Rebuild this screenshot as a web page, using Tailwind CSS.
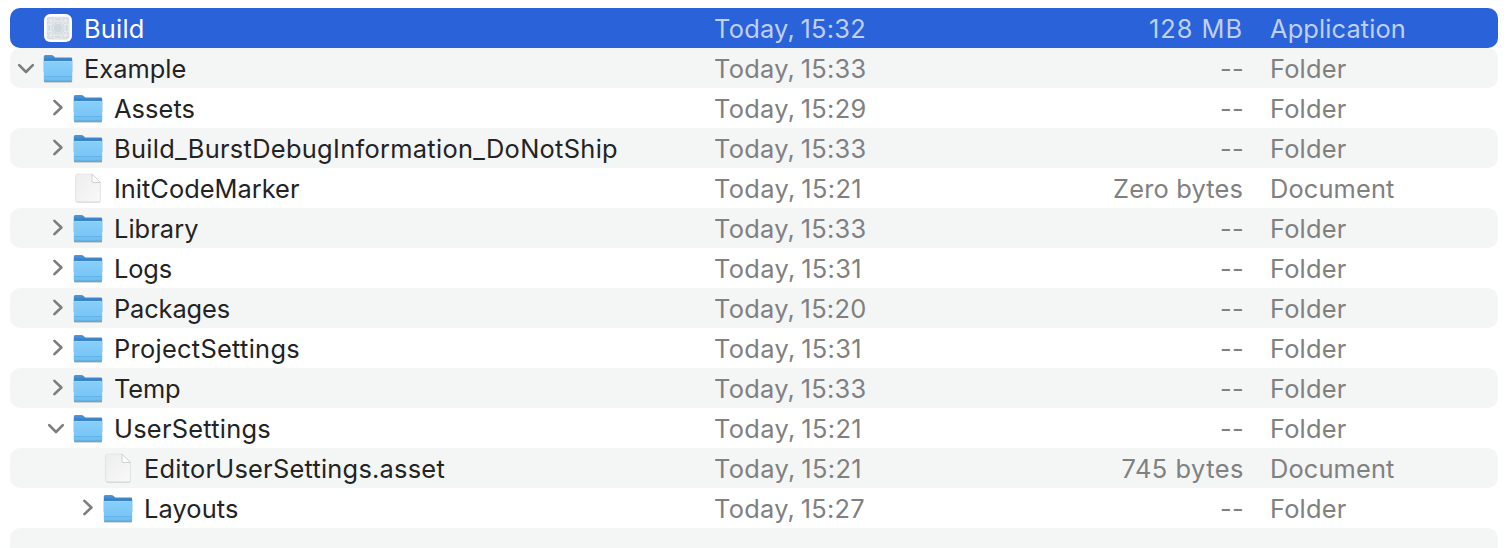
<!DOCTYPE html>
<html lang="en">
<head>
<meta charset="utf-8">
<title>Files</title>
<script src="https://cdn.jsdelivr.net/npm/@tailwindcss/browser@4"></script>
</head>
<body class="bg-white overflow-hidden">
<svg class="absolute size-0">
  <defs>
    <linearGradient id="front" x1="0" y1="0" x2="0" y2="1"><stop offset="0" stop-color="#88cefa"/><stop offset=".7" stop-color="#7ac6f6"/><stop offset="1" stop-color="#69b7ea"/></linearGradient>
    <linearGradient id="back" x1="0" y1="0" x2="0" y2="1"><stop offset="0" stop-color="#4f9cd6"/><stop offset=".4" stop-color="#2b74bf"/></linearGradient>
    <linearGradient id="paper" x1="0" y1="0" x2="1" y2="1"><stop offset="0" stop-color="#ededed"/><stop offset="1" stop-color="#f9f9f9"/></linearGradient>
    <symbol id="folder" viewBox="0 0 32 32">
      <path d="M2 28.2h28v1.6q0 .8-1 .8H3q-1 0-1-.8z" fill="#000" opacity=".3"/>
      <path d="M1.8 4.6Q1.8 3.1 3.3 3.1H9.5Q10.6 3.1 11.4 3.8L12.4 4.7Q13.2 5.6 14.3 5.6H28.8Q30.2 5.6 30.2 7V20H1.8z" fill="url(#back)"/>
      <path d="M1.8 10Q1.8 9 2.9 9H29.1Q30.2 9 30.2 10V28.6Q30.2 29.7 29.1 29.7H2.9Q1.8 29.7 1.8 28.6z" fill="url(#front)"/>
      <path d="M2.4 9.4H29.6" stroke="#9bdafc" stroke-width=".8"/>
      <path d="M2 24.6H30" stroke="#5caee2" stroke-width=".8"/>
      <path d="M2.2 29.2H29.8" stroke="#559fd0" stroke-width=".9"/>
    </symbol>
    <symbol id="doc" viewBox="0 0 32 32">
      <path d="M3.6 4.2Q3.6 2.4 5.4 2.4H20.2L28.6 10.8V28.6Q28.6 30.8 26.6 30.8H5.6Q3.6 30.8 3.6 28.6z" fill="#000" opacity=".16"/>
      <path d="M3.7 3.8Q3.7 2 5.4 2H20L28.4 10.5V28Q28.4 29.8 26.6 29.8H5.5Q3.7 29.8 3.7 28z" fill="url(#paper)" stroke="#dedede" stroke-width=".6"/>
      <path d="M20 2L28.4 10.5H21Q20 10.5 20 9.5z" fill="#fff" stroke="#c6c6c6" stroke-width=".8"/>
    </symbol>
    <symbol id="app" viewBox="0 0 32 32">
      <rect x="2" y="2.1" width="28" height="28" rx="6.2" fill="#fff"/>
      <rect x="4.7" y="4.8" width="22.6" height="22.6" rx="3" fill="#d3dbdf"/>
      <g fill="none" stroke="#eef1f3" stroke-width=".6">
        <circle cx="16" cy="16.1" r="10.5"/><circle cx="16" cy="16.1" r="7.2"/><circle cx="16" cy="16.1" r="4.8"/>
        <path d="M8.8 5V27.2M23.2 5V27.2M5 8.9H27M5 23.3H27M5 5.1L11.5 11.6M27 5.1L20.5 11.6M5 27.1L11.5 20.6M27 27.1L20.5 20.6M12.5 5V10M19.5 5V10M12.5 22V27M19.5 22V27M5 12.5H10M5 19.5H10M22 12.5H27M22 19.5H27"/>
      </g>
      <circle cx="16" cy="16.1" r="4.2" fill="#cfd8dc"/>
    </symbol>
    <symbol id="right" viewBox="0 0 20 20"><path d="M7.4 3.9L14.4 10.5L7.4 17.1" fill="none" stroke="#7d7d7d" stroke-width="2.6" stroke-linecap="round" stroke-linejoin="round"/></symbol>
    <symbol id="down" viewBox="0 0 20 20"><path d="M3.2 7.2L10 14L16.8 7.2" fill="none" stroke="#7d7d7d" stroke-width="2.6" stroke-linecap="round" stroke-linejoin="round"/></symbol>
  </defs>
</svg>
<main id="list" class="flex flex-col pt-2 pl-[10px] pr-[10px] leading-10 whitespace-pre text-[#232323]" style="font-family: Inter, 'Liberation Sans', sans-serif; font-size: 25.4px"></main>
<script>
// name, text width, indent level, disclosure, icon, date, date width, size, size width, kind, kind width
const rows = [
  ['Build', 60.5, 0, '', 'app', 'Today, 15:32', 152, '128 MB', 94, 'Application', 136],
  ['Example', 102.3, 0, 'down', 'folder', 'Today, 15:33', 152.5, '--', 24, 'Folder', 76.5],
  ['Assets', 81, 1, 'right', 'folder', 'Today, 15:29', 152.5, '--', 24, 'Folder', 76.5],
  ['Build_BurstDebugInformation_DoNotShip', 504, 1, 'right', 'folder', 'Today, 15:33', 152.5, '--', 24, 'Folder', 76.5],
  ['InitCodeMarker', 185.5, 1, '', 'doc', 'Today, 15:21', 148, 'Zero bytes', 130, 'Document', 124.5],
  ['Library', 84.5, 1, 'right', 'folder', 'Today, 15:33', 152.5, '--', 24, 'Folder', 76.5],
  ['Logs', 58, 1, 'right', 'folder', 'Today, 15:31', 148, '--', 24, 'Folder', 76.5],
  ['Packages', 116, 1, 'right', 'folder', 'Today, 15:20', 152.5, '--', 24, 'Folder', 76.5],
  ['ProjectSettings', 186, 1, 'right', 'folder', 'Today, 15:31', 148, '--', 24, 'Folder', 76.5],
  ['Temp', 66.5, 1, 'right', 'folder', 'Today, 15:33', 152.5, '--', 24, 'Folder', 76.5],
  ['UserSettings', 157, 1, 'down', 'folder', 'Today, 15:21', 148, '--', 24, 'Folder', 76.5],
  ['EditorUserSettings.asset', 301, 2, '', 'doc', 'Today, 15:21', 148, '745 bytes', 122.5, 'Document', 124.5],
  ['Layouts', 94.5, 2, 'right', 'folder', 'Today, 15:27', 151, '--', 24, 'Folder', 76.5],
];
const indent = ['pl-[6px]', 'pl-[36px]', 'pl-[66px]'];
const text = (s, w, cls = '') => `<span class="${cls}" data-w="${w}">${s}</span>`;
document.getElementById('list').innerHTML = rows.map(([n, nw, lv, tri, icon, d, dw, s, sw, k, kw], i) => {
  const bg = i === 0 ? 'bg-[#2962d9]' : i % 2 ? 'bg-[#f4f5f5]' : '';
  const sub = i === 0 ? 'text-[#c0d0f5]' : 'text-[#808080]';
  const end = s === '--' || s === '745 bytes' ? 'pr-0' : 'pr-px';
  return `<div class="flex h-10 shrink-0 rounded-[10px] ${bg}">
    <div class="flex items-center w-[704px] ${indent[lv]} ${i === 0 ? 'text-white' : ''}">
      <svg class="size-5 shrink-0 ${tri === 'right' ? 'ml-px -mt-[2px] mr-[-1px]' : ''}">${tri ? `<use href="#${tri}"/>` : ''}</svg>
      <svg class="size-8 shrink-0 ml-[6px] mr-[10px]"><use href="#${icon}"/></svg>
      ${text(n, nw, 'mt-[2px]')}
    </div>
    <div class="w-[360px] mt-px ${sub}">${text(d, dw, '[word-spacing:-2px]')}</div>
    <div class="w-[170px] mt-px text-right ${end} ${sub}">${text(s, sw)}</div>
    <div class="ml-[26px] mt-px ${sub}">${text(k, kw)}</div>
  </div>`;
}).join('') + '<div class="h-10 shrink-0 rounded-[10px] bg-[#f4f5f5]"></div>';
const fit = () => document.querySelectorAll('[data-w]').forEach(e => {
  e.style.letterSpacing = '0.001px';
  const gap = (e.dataset.w - e.getBoundingClientRect().width) / e.textContent.length;
  e.style.letterSpacing = gap + 'px';
});
fit();
addEventListener('load', fit);
</script>
</body>
</html>
